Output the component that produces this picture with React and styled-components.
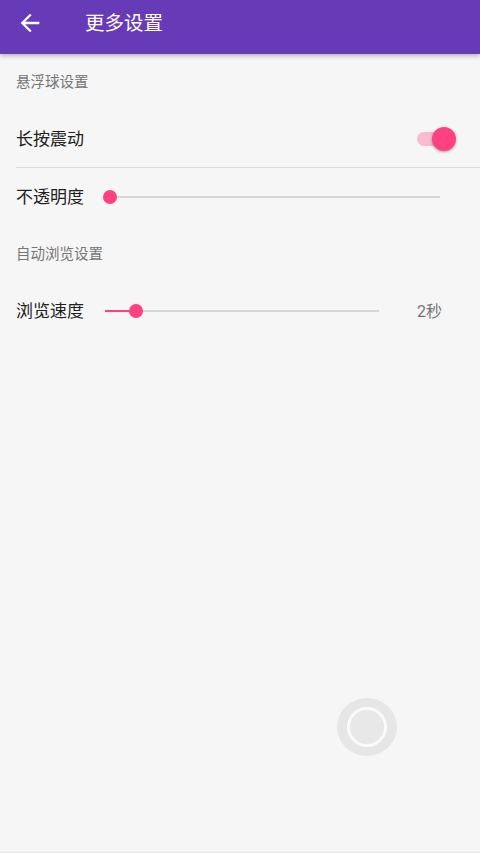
import React from 'react';
import styled, { createGlobalStyle } from 'styled-components';

const GlobalStyle = createGlobalStyle`
  * { box-sizing: border-box; }
  html, body { margin: 0; padding: 0; background: #f6f6f6; }
  body {
    font-family: Roboto, "Noto Sans CJK SC", sans-serif;
    -webkit-font-smoothing: antialiased;
  }
`;

const Page = styled.div`
  position: relative;
  height: 853px;
  display: flex;
  flex-direction: column;
  background: #f6f6f6;
  border-bottom: 1px solid #e4e4e4;
  overflow: hidden;
`;

const Toolbar = styled.header`
  height: 54px;
  flex-shrink: 0;
  display: flex;
  align-items: center;
  padding-bottom: 9px;
  background: #673ab7;
  box-shadow: 0 2px 4px rgba(0, 0, 0, 0.25);
  position: relative;
  z-index: 1;
`;

const BackButton = styled.button`
  width: 28px;
  height: 28px;
  margin-left: 16px;
  padding: 0;
  border: none;
  background: none;
  display: flex;
  svg { width: 28px; height: 28px; fill: #fff; }
`;

const Title = styled.h1`
  margin: 0 0 0 41px;
  padding-bottom: 3px;
  font-size: 19.5px;
  font-weight: 400;
  color: #fff;
  font-family: Roboto, "Noto Sans CJK SC", sans-serif;
`;

const SectionLabel = styled.div`
  height: ${p => p.$h || 56}px;
  display: flex;
  align-items: center;
  padding: 0 0 4px 16px;
  font-size: 14.5px;
  color: #757575;
`;

const Row = styled.div`
  height: ${p => p.$h || 58}px;
  display: flex;
  align-items: center;
  padding: 0 ${p => p.$right || 40}px 0 16px;
`;

const DividedRow = styled(Row)`
  position: relative;
  &::after {
    content: '';
    position: absolute;
    left: 16px;
    right: 0;
    bottom: 0;
    height: 1px;
    background: #dcdcdc;
  }
`;

const Label = styled.span`
  font-size: 17px;
  color: #212121;
  flex-shrink: 0;
  padding-bottom: 4px;
  margin-right: ${p => p.$gap || 0}px;
`;

const Spacer = styled.div`
  flex: 1;
`;

const SwitchBox = styled.div`
  position: relative;
  width: 39px;
  height: 24px;
  margin-top: -1px;
`;

const SwitchTrack = styled.div`
  position: absolute;
  left: 0;
  top: 5px;
  width: 34px;
  height: 14px;
  border-radius: 7px;
  background: #f8bbd0;
`;

const SwitchThumb = styled.div`
  position: absolute;
  right: 0;
  top: 0;
  width: 24px;
  height: 24px;
  border-radius: 50%;
  background: #ff4081;
  box-shadow: 0 1px 3px rgba(0, 0, 0, 0.35);
`;

const SliderTrack = styled.div`
  position: relative;
  flex: 1;
  height: 2px;
  background: #d6d6d6;
`;

const SliderFill = styled.div`
  position: absolute;
  left: 0;
  top: 0;
  height: 2px;
  background: #ff4081;
`;

const SliderThumb = styled.div`
  position: absolute;
  top: -6px;
  width: 14px;
  height: 14px;
  margin-left: -7px;
  border-radius: 50%;
  background: #ff4081;
`;

const Value = styled.span`
  margin-left: 38px;
  padding-bottom: 3px;
  font-size: 16px;
  color: #757575;
`;

const FloatBall = styled.div`
  position: absolute;
  left: 337px;
  top: 698px;
  width: 60px;
  height: 58px;
  border-radius: 50%;
  background: #e6e6e6;
  display: flex;
  align-items: center;
  justify-content: center;
`;

const BallRing = styled.div`
  width: 40px;
  height: 40px;
  border-radius: 50%;
  border: 3px solid #fafafa;
  background: #e8e8e8;
`;

function Slider({ value }) {
  return (
    <SliderTrack>
      <SliderFill style={{ width: `${value}%` }} />
      <SliderThumb style={{ left: `${value}%` }} />
    </SliderTrack>
  );
}

export default function App() {
  return (
    <>
      <GlobalStyle />
      <Page>
        <Toolbar>
          <BackButton aria-label="back">
            <svg viewBox="0 0 24 24">
              <path d="M20 11H7.83l5.59-5.59L12 4l-8 8 8 8 1.41-1.41L7.83 13H20v-2z" />
            </svg>
          </BackButton>
          <Title>更多设置</Title>
        </Toolbar>

        <SectionLabel $h={57}>悬浮球设置</SectionLabel>
        <DividedRow $h={57} $right={24}>
          <Label>长按震动</Label>
          <Spacer />
          <SwitchBox>
            <SwitchTrack />
            <SwitchThumb />
          </SwitchBox>
        </DividedRow>
        <Row $h={58}>
          <Label $gap={21}>不透明度</Label>
          <Slider value={1.5} />
        </Row>

        <SectionLabel $h={56}>自动浏览设置</SectionLabel>
        <Row $h={58} $right={38}>
          <Label $gap={21}>浏览速度</Label>
          <Slider value={11.4} />
          <Value>2秒</Value>
        </Row>

        <FloatBall>
          <BallRing />
        </FloatBall>
      </Page>
    </>
  );
}
